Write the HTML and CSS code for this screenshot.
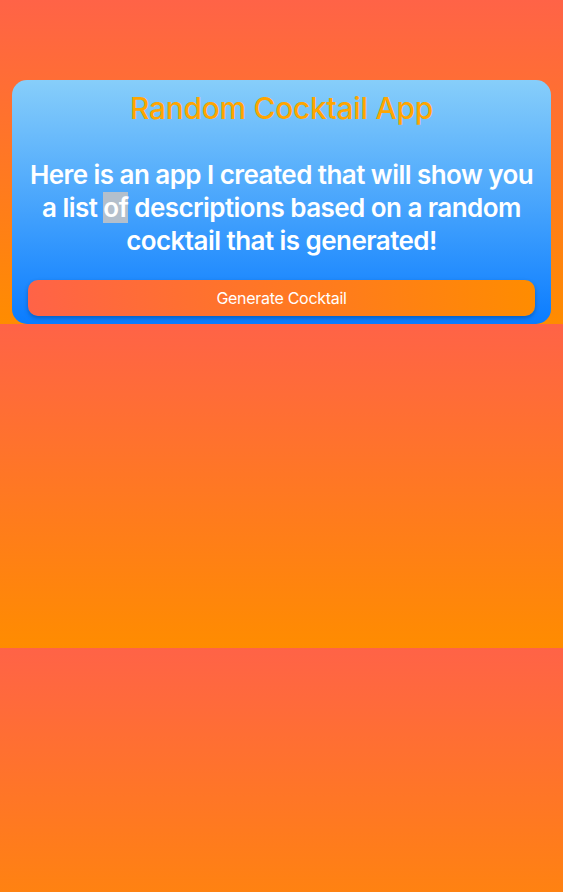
FILE: index.html
```html
<!DOCTYPE html>
<html lang="en">
<head>
<meta charset="utf-8">
<title>Random Cocktail App</title>
<link rel="stylesheet" href="styles.css">
</head>
<body>
  <main class="card">
    <h1 class="title">Random Cocktail App</h1>
    <p class="intro">Here is an app I created that will show you a list <span class="sel">of</span> descriptions based on a random cocktail that is generated!</p>
    <button class="btn" type="button">Generate Cocktail</button>
  </main>
</body>
</html>
```
FILE: styles.css
```css
html {
  margin: 0;
}
body {
  margin: 0;
  padding: 80px 12px 0;
  background: linear-gradient(#ff6347, #ff8c00);
  font-family: Inter, "Noto Sans", sans-serif;
}
.card {
  display: flex;
  flex-direction: column;
  align-items: stretch;
  padding: 8px 16px 8px;
  border-radius: 15px;
  background: linear-gradient(#87cefa, #0a7cff);
  text-align: center;
}
.title {
  margin: 0;
  font-size: 30px;
  font-weight: 500;
  line-height: 40px;
  letter-spacing: -0.3px;
  color: #ffa500;
}
.intro {
  margin: 30px 0 23px;
  font-size: 26px;
  font-weight: 600;
  line-height: 33px;
  letter-spacing: -0.55px;
  color: #fff;
}
.sel {
  background: #b3bfcc;
}
.btn {
  height: 36px;
  border: 0;
  border-radius: 10px;
  background: linear-gradient(to right, #ff6347, #ff8c00);
  color: #fff;
  font-family: Inter, "Noto Sans", sans-serif;
  font-size: 16px;
  letter-spacing: -0.3px;
  box-shadow: 0 2px 4px rgba(0, 0, 0, 0.25);
  cursor: pointer;
}
```
